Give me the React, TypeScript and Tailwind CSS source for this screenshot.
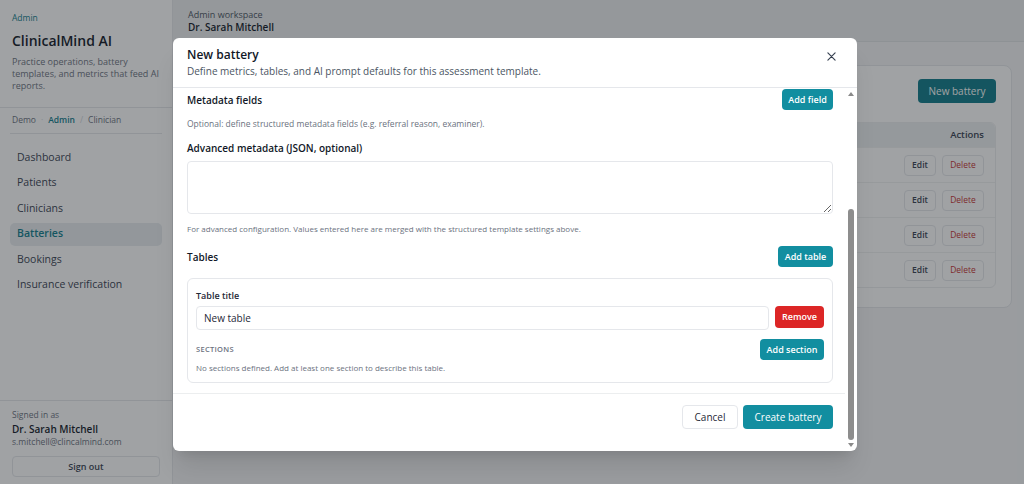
import React from "react";

const teal = "bg-[#128ea0]";

function SmallBtn({ children, className = "" }: { children: React.ReactNode; className?: string }) {
  return (
    <button
      className={`${teal} text-white font-semibold text-[9px] rounded-[4px] leading-none whitespace-nowrap ${className}`}
    >
      {children}
    </button>
  );
}

export default function App() {
  const navItems = ["Dashboard", "Patients", "Clinicians", "Batteries", "Bookings", "Insurance verification"];
  return (
    <div className="relative w-[1024px] h-[484px] overflow-hidden flex font-['Open_Sans',sans-serif] text-[#1f2937]">
      {/* Sidebar */}
      <aside className="w-[173px] shrink-0 bg-white border-r border-[#e5e7eb] flex flex-col">
        <div className="px-[12px] pt-[12px] pb-[15px] border-b border-[#e5e7eb]">
          <div className="text-[8.5px] leading-[12px] text-[#0f7c8c]">Admin</div>
          <div className="mt-[7px] text-[14px] leading-[20px] font-semibold text-[#111827]">ClinicalMind AI</div>
          <div className="mt-[5px] text-[9px] leading-[12px] text-[#6b7280] whitespace-nowrap">
            Practice operations, battery
            <br />
            templates, and metrics that feed AI
            <br />
            reports.
          </div>
        </div>
        <div className="mx-[10px] px-[2px] h-[26px] flex items-center gap-[5px] text-[8.5px] text-[#6b7280] border-b border-[#e5e7eb]">
          <span>Demo</span>
          <span className="text-[#d1d5db]">·</span>
          <span className="font-semibold text-[#0f7c8c]">Admin</span>
          <span className="text-[#d1d5db]">/</span>
          <span>Clinician</span>
        </div>
        <nav className="mt-[12px] px-[10px] flex flex-col gap-[2.5px]">
          {navItems.map((n) => (
            <div
              key={n}
              className={`h-[23px] flex items-center px-[7px] rounded-[5px] text-[10.5px] font-medium ${
                n === "Batteries" ? "bg-[#e8edf0] text-[#0f7c8c] font-semibold" : "text-[#374151]"
              }`}
            >
              {n}
            </div>
          ))}
        </nav>
        <div className="mt-auto border-t border-[#e5e7eb] px-[12px] pt-[8px] pb-[7px]">
          <div className="text-[8.5px] leading-[12px] text-[#6b7280]">Signed in as</div>
          <div className="text-[10px] leading-[14px] font-semibold text-[#111827] mt-[1px]">Dr. Sarah Mitchell</div>
          <div className="text-[8.5px] leading-[12px] text-[#6b7280]">s.mitchell@clincalmind.com</div>
          <button className="mt-[8px] w-full h-[21px] rounded-[4px] border border-[#e5e7eb] text-[9px] font-semibold text-[#374151]">
            Sign out
          </button>
        </div>
      </aside>

      {/* Main */}
      <main className="flex-1 flex flex-col bg-[#f4f5f6]">
        <header className="h-[42px] shrink-0 bg-[#eceeef] border-b border-[#e0e3e5] px-[15px] pt-[9px]">
          <div className="text-[9px] leading-[12px] text-[#4b5563]">Admin workspace</div>
          <div className="text-[10px] leading-[13px] font-semibold text-[#111827]">Dr. Sarah Mitchell</div>
        </header>
        <div className="flex-1 pl-[16px] pr-[12px] pt-[23px]">
          <div className="h-[243px] bg-white rounded-[8px] border border-[#e5e7eb] px-[15px] pt-[13px]">
            <div className="flex justify-end items-center">
              <button className="h-[24px] w-[78px] rounded-[4px] bg-[#0e7b8a] text-white text-[10px] font-medium">
                New battery
              </button>
            </div>
            <div className="mt-[19px] rounded-[6px] border border-[#eceeef] overflow-hidden">
              <div className="h-[24px] bg-[#edf0f1] flex items-center justify-end pr-[11px] text-[9.5px] font-semibold text-[#374151]">
                Actions
              </div>
              {[0, 1, 2, 3].map((i) => (
                <div key={i} className="h-[35px] flex items-center justify-end gap-[6px] pr-[11px] border-t border-[#f0f1f2]">
                  <button className="h-[21px] w-[32px] rounded-[4px] border border-[#e5e7eb] text-[8.5px] font-semibold text-[#374151]">
                    Edit
                  </button>
                  <button className="h-[21px] w-[42px] rounded-[4px] border border-[#e5e7eb] text-[8.5px] text-[#c53030]">
                    Delete
                  </button>
                </div>
              ))}
            </div>
          </div>
        </div>
      </main>

      {/* Overlay + modal */}
      <div className="absolute inset-0 bg-[rgba(28,34,38,0.42)] flex items-start justify-start pl-[173px] pt-[38px]">
        <div className="w-[684px] h-[413px] bg-white rounded-[6px] flex flex-col overflow-hidden shadow-xl">
          <div className="h-[50px] shrink-0 border-b border-[#e5e7eb] px-[14px] pt-[9px] flex">
            <div className="flex-1">
              <div className="text-[12px] leading-[16px] font-semibold text-[#111827]">New battery</div>
              <div className="mt-[1px] text-[10px] leading-[14px] text-[#4b5563]">
                Define metrics, tables, and AI prompt defaults for this assessment template.
              </div>
            </div>
            <div className="pr-[7px] pt-[5px]">
              <svg width="9" height="9" viewBox="0 0 10 10" className="text-[#374151]">
                <path d="M1 1L9 9M9 1L1 9" stroke="currentColor" strokeWidth="1.3" strokeLinecap="round" />
              </svg>
            </div>
          </div>
          <div className="flex-1 flex min-h-0">
            <div className="flex-1 flex flex-col min-w-0">
              <div className="flex-1 pl-[14px] pr-[12px] overflow-hidden">
                <div className="h-[22px] flex items-center justify-between">
                  <div className="text-[10px] leading-[14px] font-semibold text-[#111827] mt-[2px]">Metadata fields</div>
                  <SmallBtn className="h-[21px] w-[51px] mt-[1px]">Add field</SmallBtn>
                </div>
                <div className="mt-[8px] text-[8.5px] leading-[12px] text-[#6b7280]">
                  Optional: define structured metadata fields (e.g. referral reason, examiner).
                </div>
                <div className="mt-[11px] text-[10px] leading-[14px] font-semibold text-[#111827]">
                  Advanced metadata (JSON, optional)
                </div>
                <textarea className="mt-[6px] block w-full h-[53px] rounded-[4px] border border-[#e5e7eb] resize-y" />
                <div className="mt-[9px] text-[8px] leading-[12px] text-[#6b7280]">
                  For advanced configuration. Values entered here are merged with the structured template settings above.
                </div>
                <div className="mt-[11px] h-[21px] flex items-center justify-between">
                  <div className="text-[10px] leading-[14px] font-semibold text-[#111827] mt-[1px]">Tables</div>
                  <SmallBtn className="h-[21px] w-[55px]">Add table</SmallBtn>
                </div>
                <div className="mt-[11px] h-[105px] rounded-[6px] border border-[#e5e7eb] px-[8px] pt-[11px]">
                  <div className="text-[9px] leading-[12px] font-semibold text-[#1f2937]">Table title</div>
                  <div className="mt-[4px] flex gap-[6px]">
                    <div className="flex-1 h-[24px] rounded-[4px] border border-[#e5e7eb] flex items-center px-[7px] text-[10px] text-[#1f2937]">
                      New table
                    </div>
                    <button className="h-[22px] w-[49px] rounded-[4px] bg-[#dc2626] text-white text-[9px] font-semibold">
                      Remove
                    </button>
                  </div>
                  <div className="mt-[9px] h-[21px] flex items-center justify-between">
                    <div className="text-[7.5px] font-semibold tracking-[0.3px] text-[#6b7280]">SECTIONS</div>
                    <SmallBtn className="h-[21px] w-[64px]">Add section</SmallBtn>
                  </div>
                  <div className="mt-[2px] text-[8px] leading-[12px] text-[#6b7280]">
                    No sections defined. Add at least one section to describe this table.
                  </div>
                </div>
              </div>
              <div className="h-[58px] shrink-0 border-t border-[#eceeef] flex justify-end items-start gap-[5px] pt-[11px] pr-[12px]">
                <button className="h-[24px] w-[56px] rounded-[4px] border border-[#e5e7eb] text-[10px] text-[#1f2937]">
                  Cancel
                </button>
                <button className={`h-[24px] w-[90px] rounded-[4px] ${teal} text-white text-[10px] font-medium`}>
                  Create battery
                </button>
              </div>
            </div>
            {/* scrollbar */}
            <div className="w-[12px] shrink-0 flex flex-col items-center pt-[3px] pb-[3px]">
              <svg width="8" height="6" viewBox="0 0 8 6">
                <path d="M4 1L7 5H1Z" fill="#8a8a8a" />
              </svg>
              <div className="flex-1 w-full flex flex-col items-center pt-[112px] pb-[2px]">
                <div className="flex-1 w-[6px] rounded-[3px] bg-[#8d8d8d]" />
              </div>
              <svg width="8" height="6" viewBox="0 0 8 6">
                <path d="M4 5L7 1H1Z" fill="#8a8a8a" />
              </svg>
            </div>
          </div>
        </div>
      </div>
    </div>
  );
}
